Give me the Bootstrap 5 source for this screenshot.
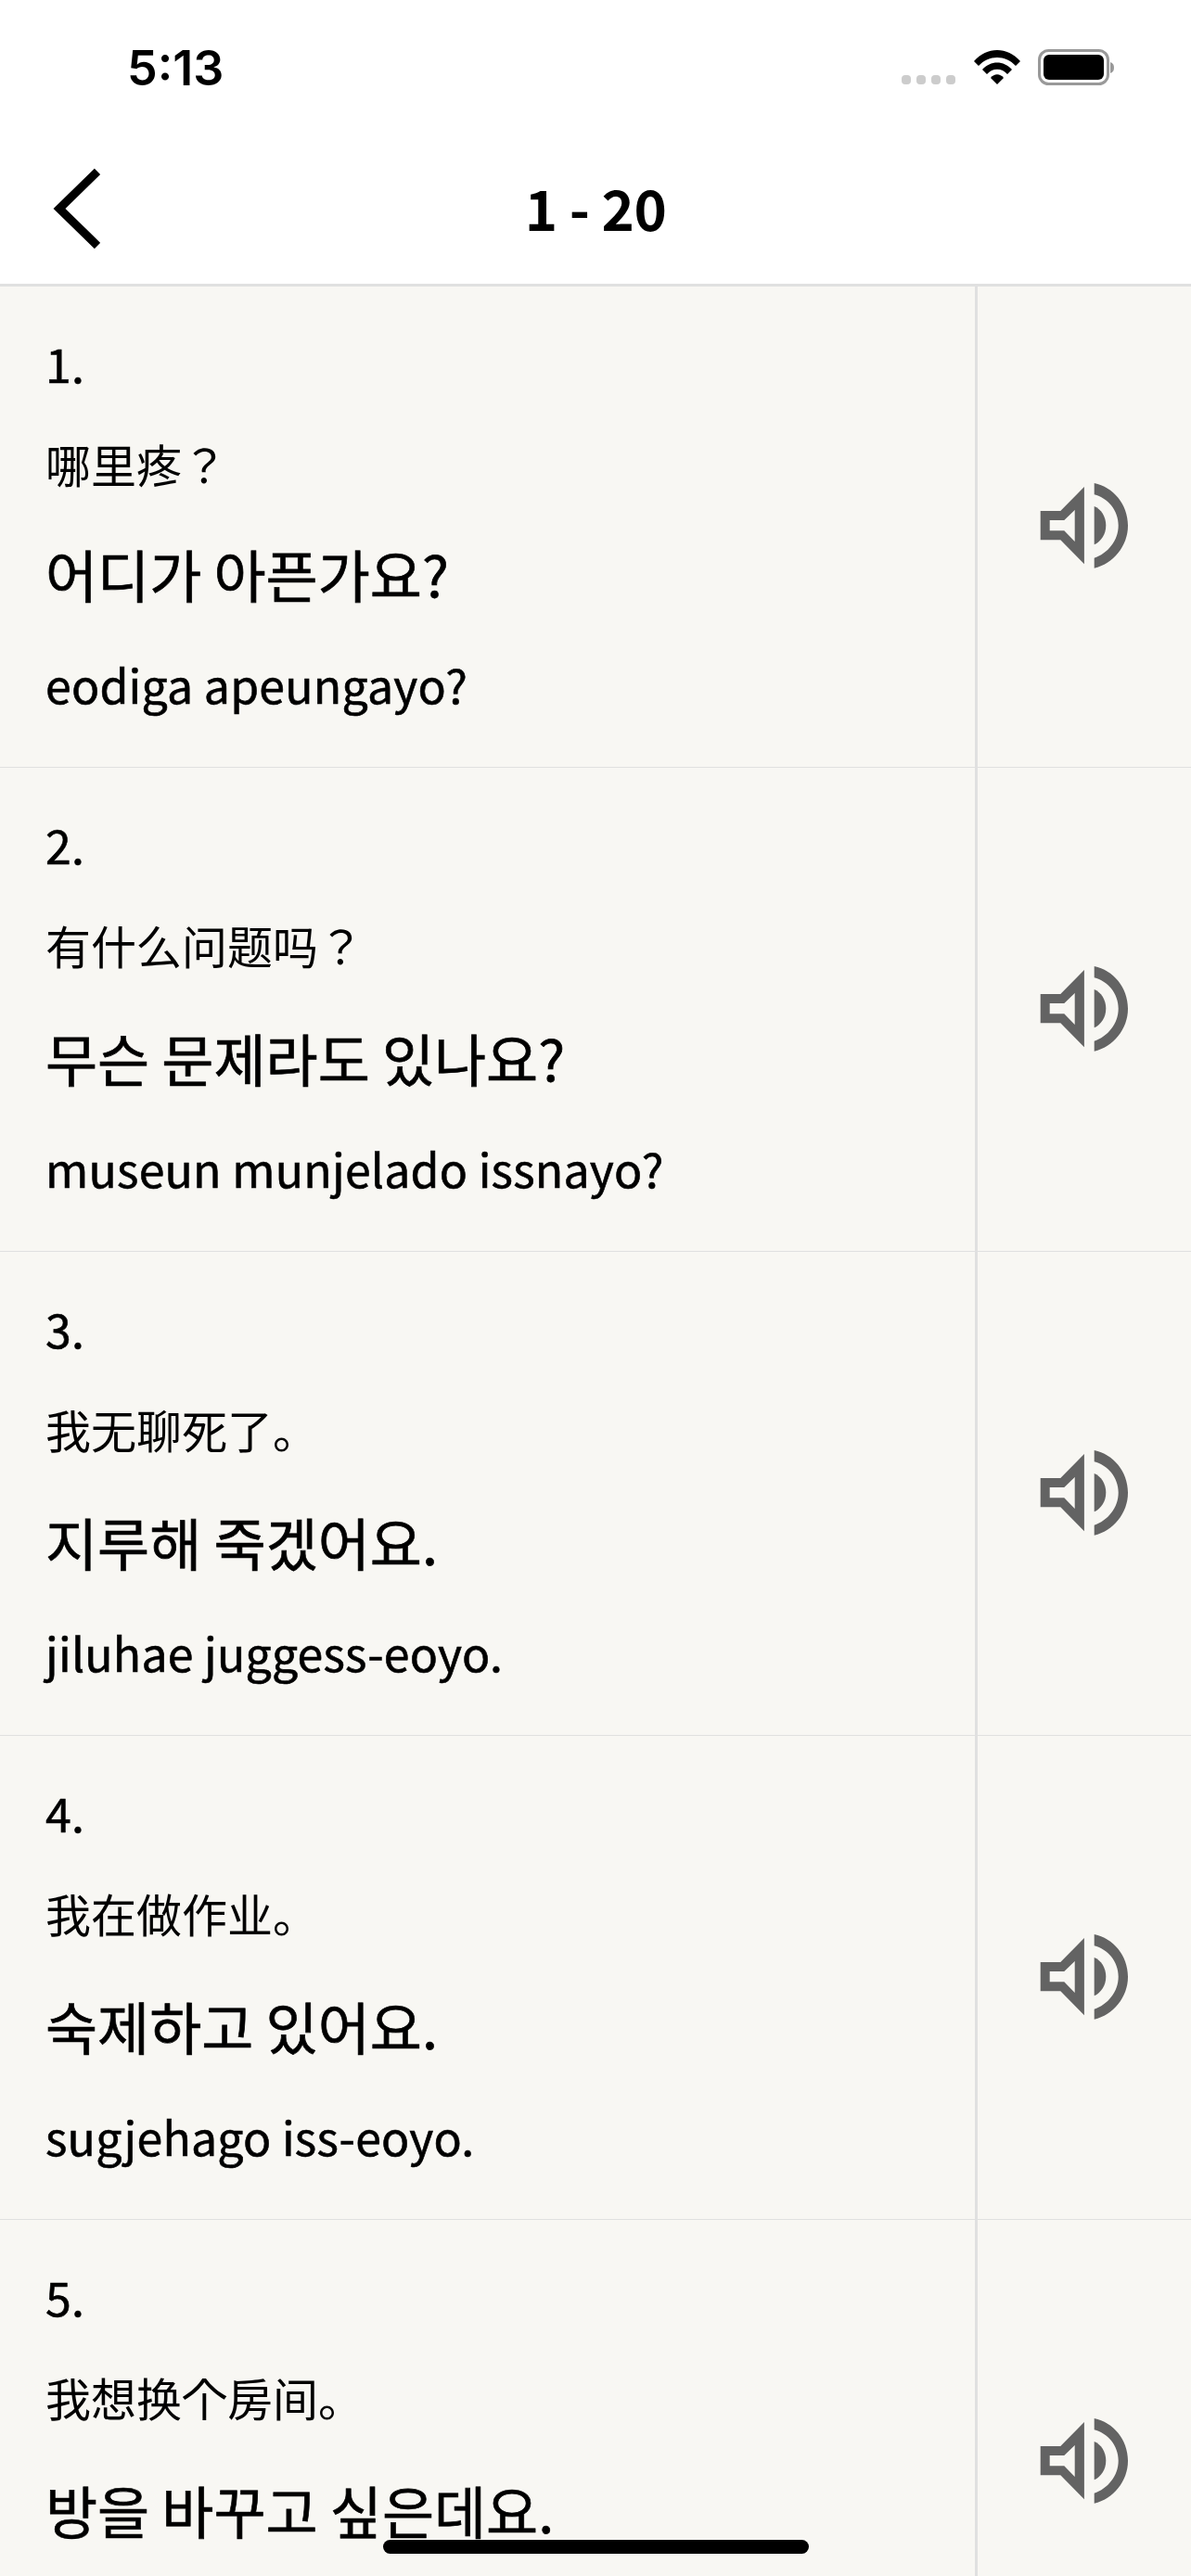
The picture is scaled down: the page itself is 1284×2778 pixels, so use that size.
<!DOCTYPE html>
<html lang="ko">
<head>
    <meta charset="UTF-8">
    <meta name="viewport" content="width=device-width, initial-scale=1.0">
    <title>1 - 20</title>
    <link href="https://cdn.jsdelivr.net/npm/bootstrap@5.3.0/dist/css/bootstrap.min.css" rel="stylesheet">
    <style>
        html, body { height: 2778px; overflow: hidden; }
        body { background: #f8f7f3; color: #000; font-family: "Noto Sans CJK KR", sans-serif; }
        .status-row { height: 144px; background: #fff; padding: 0 82px 0 137px; }
        .status-time { font-family: Inter, "Liberation Sans", sans-serif; font-weight: 600; font-size: 52px; line-height: 1; padding-top: 48px; }
        .status-icons { padding-top: 51px; }
        .title-row { height: 165px; background: #fff; border-bottom: 3px solid #e0e0e0; }
        .back-link { width: 130px; height: 100%; padding-left: 56px; }
        .title-text { font-size: 60px; font-weight: 700; line-height: 1; letter-spacing: -.5px; margin-top: -2px; }
        .phrase-list { --bs-list-group-bg: #f8f7f3; --bs-list-group-border-radius: 0; }
        .phrase-item { height: 522px; padding: 0; border: 0; border-bottom: 3px solid #e0e0e0; color: #000; }
        .phrase-item:first-child { height: 519px; }
        .phrase-text { width: 1054px; padding: 47px 0 0 49px; border-right: 3px solid #e0e0e0; }
        .phrase-num, .phrase-roman { font-size: 50px; line-height: 70px; letter-spacing: .2px; -webkit-text-stroke: .6px #000; }
        .phrase-zh { font-size: 49px; line-height: 70px; margin-top: 39px; }
        .phrase-ko { font-size: 61px; word-spacing: -4px; line-height: 80px; margin-top: 47px; -webkit-text-stroke: .7px #000; }
        .phrase-item:first-child .phrase-ko { margin-top: 44px; }
        .phrase-roman { margin-top: 43px; }
        .sound-cell { width: 230px; }
        .home-bar { left: 413px; top: 2739px; width: 459px; height: 15px; background: #000; border-radius: 8px; }
    </style>
</head>
<body>
    <div class="status-row d-flex justify-content-between">
        <div class="status-time">5:13</div>
        <div class="status-icons">
            <svg width="232" height="46" viewBox="971 51 232 46">
                <rect x="973" y="81" width="10" height="10" rx="4" fill="#ccc"/>
                <rect x="989" y="81" width="10" height="10" rx="4" fill="#ccc"/>
                <rect x="1005" y="81" width="10" height="10" rx="4" fill="#ccc"/>
                <rect x="1021" y="81" width="10" height="10" rx="4" fill="#ccc"/>
                <path d="M1051 66 C1065 50 1087 50 1101 66 L1096 71 C1085 59 1067 59 1056 71 Z" fill="#000"/>
                <path d="M1060 75 C1069 65 1083 65 1092 75 L1087 80 C1081 73 1071 73 1065 80 Z" fill="#000"/>
                <path d="M1069 84 C1073 79 1079 79 1083 84 L1076 91 Z" fill="#000"/>
                <rect x="1121.5" y="54.5" width="74" height="36" rx="10" fill="none" stroke="#999" stroke-width="3"/>
                <rect x="1126" y="59" width="65" height="27" rx="6" fill="#000"/>
                <path d="M1198 67 C1201 68 1202 70 1202 73 C1202 76 1201 78 1198 79 Z" fill="#999"/>
            </svg>
        </div>
    </div>
    <div class="title-row position-relative d-flex align-items-center">
        <a class="back-link d-flex align-items-center" href="#" aria-label="Back">
            <svg width="52" height="88" viewBox="0 0 52 88">
                <path d="M49 4 L8 44 L49 84" fill="none" stroke="#000" stroke-width="9"/>
            </svg>
        </a>
        <div class="title-text position-absolute top-50 start-50 translate-middle" lang="en">1 - 20</div>
    </div>
    <ul class="phrase-list list-group list-group-flush">
        <li class="phrase-item list-group-item d-flex">
            <div class="phrase-text">
                <div class="phrase-num" lang="en">1.</div>
                <div class="phrase-zh">哪里疼？</div>
                <div class="phrase-ko">어디가 아픈가요?</div>
                <div class="phrase-roman" lang="en">eodiga apeungayo?</div>
            </div>
            <div class="sound-cell d-flex align-items-center justify-content-center">
                <svg width="96" height="96" viewBox="0 0 96 96"><use href="#speaker"/></svg>
            </div>
        </li>
        <li class="phrase-item list-group-item d-flex">
            <div class="phrase-text">
                <div class="phrase-num" lang="en">2.</div>
                <div class="phrase-zh">有什么问题吗？</div>
                <div class="phrase-ko">무슨 문제라도 있나요?</div>
                <div class="phrase-roman" lang="en">museun munjelado issnayo?</div>
            </div>
            <div class="sound-cell d-flex align-items-center justify-content-center">
                <svg width="96" height="96" viewBox="0 0 96 96"><use href="#speaker"/></svg>
            </div>
        </li>
        <li class="phrase-item list-group-item d-flex">
            <div class="phrase-text">
                <div class="phrase-num" lang="en">3.</div>
                <div class="phrase-zh">我无聊死了。</div>
                <div class="phrase-ko">지루해 죽겠어요.</div>
                <div class="phrase-roman" lang="en">jiluhae juggess-eoyo.</div>
            </div>
            <div class="sound-cell d-flex align-items-center justify-content-center">
                <svg width="96" height="96" viewBox="0 0 96 96"><use href="#speaker"/></svg>
            </div>
        </li>
        <li class="phrase-item list-group-item d-flex">
            <div class="phrase-text">
                <div class="phrase-num" lang="en">4.</div>
                <div class="phrase-zh">我在做作业。</div>
                <div class="phrase-ko">숙제하고 있어요.</div>
                <div class="phrase-roman" lang="en">sugjehago iss-eoyo.</div>
            </div>
            <div class="sound-cell d-flex align-items-center justify-content-center">
                <svg width="96" height="96" viewBox="0 0 96 96"><use href="#speaker"/></svg>
            </div>
        </li>
        <li class="phrase-item list-group-item d-flex">
            <div class="phrase-text">
                <div class="phrase-num" lang="en">5.</div>
                <div class="phrase-zh">我想换个房间。</div>
                <div class="phrase-ko">방을 바꾸고 싶은데요.</div>
            </div>
            <div class="sound-cell d-flex align-items-center justify-content-center">
                <svg width="96" height="96" viewBox="0 0 96 96"><use href="#speaker"/></svg>
            </div>
        </li>
    </ul>
    <div class="home-bar position-absolute"></div>

    <svg width="0" height="0" class="position-absolute">
        <defs>
            <g id="speaker" fill="#636363">
                <path fill-rule="evenodd" d="M0.7 31 H22.3 L47.9 5 V88.3 L22.3 62.3 H0.7 Z M10.7 41 V52.3 H26.3 L37.7 64 V30 L26.3 41 Z"/>
                <path d="M58.7 26 C66 29 71.3 37 71.3 46.7 C71.3 56 66 64 58.7 67.3 Z"/>
                <path d="M58.7 1 C79 5 95 24 95 46.7 C95 69 79 88 58.7 92.7 V81.7 C73 77 84.7 63 84.7 46.7 C84.7 30 73 17 58.7 13.3 Z"/>
            </g>
        </defs>
    </svg>
    <script src="https://cdn.jsdelivr.net/npm/bootstrap@5.3.0/dist/js/bootstrap.bundle.min.js"></script>
</body>
</html>
